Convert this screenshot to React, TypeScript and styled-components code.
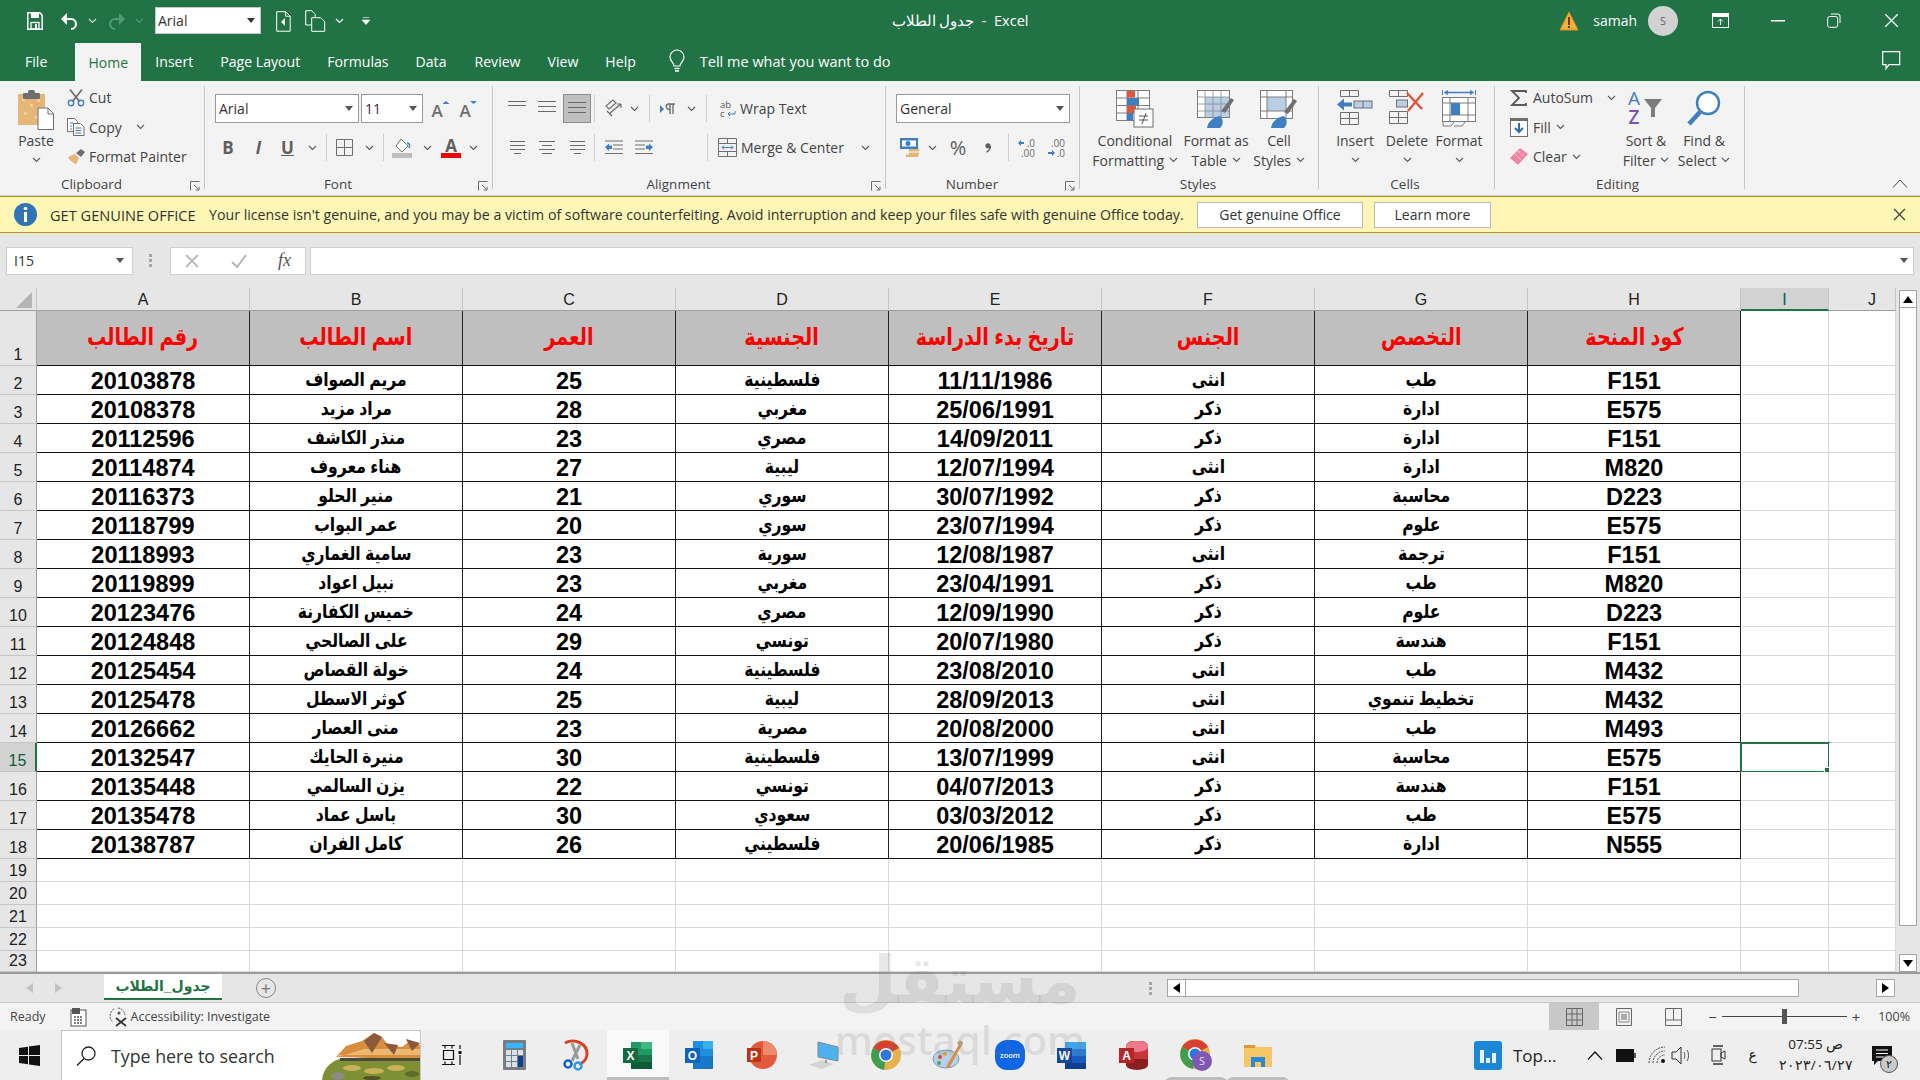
import React from "react";
import styled, {createGlobalStyle} from "styled-components";

const uiFont = `"Open Sans", "Noto Sans", sans-serif`;
const sheetFont = `"Liberation Sans", "DejaVu Sans", sans-serif`;

const GlobalStyle = createGlobalStyle`
  html, body { margin: 0; padding: 0; background: #fff; }
  body { font-family: ${uiFont}; overflow: hidden; }
  * { box-sizing: border-box; }
  svg { overflow: visible; }
`;

const headers = ["رقم الطالب", "اسم الطالب", "العمر", "الجنسية", "تاريخ بدء الدراسة", "الجنس", "التخصص", "كود المنحة"];
const students = [
    ["20103878", "مريم الصواف", "25", "فلسطينية", "11/11/1986", "انثى", "طب", "F151"],
    ["20108378", "مراد مزيد", "28", "مغربي", "25/06/1991", "ذكر", "ادارة", "E575"],
    ["20112596", "منذر الكاشف", "23", "مصري", "14/09/2011", "ذكر", "ادارة", "F151"],
    ["20114874", "هناء معروف", "27", "ليبية", "12/07/1994", "انثى", "ادارة", "M820"],
    ["20116373", "منير الحلو", "21", "سوري", "30/07/1992", "ذكر", "محاسبة", "D223"],
    ["20118799", "عمر البواب", "20", "سوري", "23/07/1994", "ذكر", "علوم", "E575"],
    ["20118993", "سامية الغماري", "23", "سورية", "12/08/1987", "انثى", "ترجمة", "F151"],
    ["20119899", "نبيل اعواد", "23", "مغربي", "23/04/1991", "ذكر", "طب", "M820"],
    ["20123476", "خميس الكفارنة", "24", "مصري", "12/09/1990", "ذكر", "علوم", "D223"],
    ["20124848", "على الصالحي", "29", "تونسي", "20/07/1980", "ذكر", "هندسة", "F151"],
    ["20125454", "خولة القصاص", "24", "فلسطينية", "23/08/2010", "انثى", "طب", "M432"],
    ["20125478", "كوثر الاسطل", "25", "ليبية", "28/09/2013", "انثى", "تخطيط تنموي", "M432"],
    ["20126662", "منى العصار", "23", "مصرية", "20/08/2000", "انثى", "طب", "M493"],
    ["20132547", "منيرة الحايك", "30", "فلسطينية", "13/07/1999", "انثى", "محاسبة", "E575"],
    ["20135448", "يزن السالمي", "22", "تونسي", "04/07/2013", "ذكر", "هندسة", "F151"],
    ["20135478", "باسل عماد", "30", "سعودي", "03/03/2012", "ذكر", "طب", "E575"],
    ["20138787", "كامل الفران", "26", "فلسطيني", "20/06/1985", "ذكر", "ادارة", "N555"],
];
const columns = ["A", "B", "C", "D", "E", "F", "G", "H", "I", "J"];
const ribbonTabs: [string, number][] = [["Insert", 14], ["Page Layout", 27], ["Formulas", 27], ["Data", 27], ["Review", 28], ["View", 27], ["Help", 27]];

const Chev = ({c = "#5a5a5a"}: { c?: string }) =>
    <svg width="9" height="6" viewBox="0 0 9 6"><path d="M1 1l3.500 3.500L8 1" stroke={c} strokeWidth="1.100" fill="none"/></svg>;
const Caret = ({c = "#555"}: { c?: string }) =>
    <svg width="8" height="5" viewBox="0 0 8 5"><path d="M0 0h8L4 5z" fill={c}/></svg>;
const Lines = ({w, x = [0, 0, 0, 0], gap = 4}: { w: number, x?: number[], gap?: number }) =>
    <svg width={w} height={gap * 3 + 1} viewBox={`0 0 ${w} ${gap * 3 + 1}`}>
        {x.map((o, i) => <rect key={i} x={o} y={i * gap} width={Math.max(w - 2 * o, 0)} height="1" fill="#6a6a6a"/>)}
    </svg>;

const SaveIcon = () => <svg width="16" height="18" viewBox="0 0 16 18"><path d="M.8.800h12l2.400 2.400v14H.8z" fill="none" stroke="#fff" strokeWidth="1.500"/><rect x="4" y="1" width="8" height="5" fill="#fff"/><rect x="4" y="10.500" width="8" height="6.500" fill="none" stroke="#fff" strokeWidth="1.300"/><rect x="8" y="12" width="2" height="4" fill="#fff"/></svg>;
const UndoIcon = ({dim}: { dim?: boolean }) => <svg width="19" height="18" viewBox="0 0 19 18" style={{transform: dim ? "scaleX(-1)" : undefined}}><path d="M6 7h5a5 5 0 0 1 0 10" fill="none" stroke={dim ? "#4f9a72" : "#fff"} strokeWidth="2.200"/><path d="M1 7l6-6v12z" fill={dim ? "#4f9a72" : "#fff"}/></svg>;
const DocIcon = () => <svg width="15" height="22" viewBox="0 0 15 22"><path d="M.7 1.700h9l4.500 4.500v15H.7z" fill="none" stroke="#fff"/><path d="M9.500 1.700v4.500h4.700" fill="none" stroke="#fff"/><path d="M9 8v8l-4-4z" fill="#fff"/></svg>;
const DocsIcon = () => <svg width="21" height="22" viewBox="0 0 21 22"><path d="M.7.700h6l3.500 3.500v10.800H.7z" fill="none" stroke="#fff"/><path d="M6.700 7.700h9l4 4v9.600h-13z" fill="#1f7244" stroke="#fff"/></svg>;
const WarnIcon = () => <svg width="20" height="20" viewBox="0 0 20 20"><path d="M10 1L19 19H1z" fill="#f4b23c" stroke="#e08a1e"/><rect x="9" y="6" width="2" height="8" fill="#7a3b00"/><rect x="9" y="15" width="2" height="2" fill="#7a3b00"/></svg>;
const RibbonDisplay = () => <svg width="17" height="15" viewBox="0 0 17 15"><rect x=".5" y=".5" width="16" height="14" fill="none" stroke="#fff"/><rect x="1" y="1" width="15" height="3" fill="#fff"/><path d="M8.500 12V6M6 8.500l2.500-2.500L11 8.500" fill="none" stroke="#fff"/></svg>;
const CommentIcon = () => <svg width="19" height="20" viewBox="0 0 19 20"><path d="M.7.700h17v13H7l-3 4v-4H.7z" fill="none" stroke="#fff" strokeWidth="1.200"/></svg>;
const BulbIcon = () => <svg width="16" height="23" viewBox="0 0 16 23"><path d="M5 16c0-3-4-5-4-9a7 7 0 0 1 14 0c0 4-4 6-4 9z" fill="none" stroke="#fff" strokeWidth="1.200"/><path d="M5.500 18.500h5M6 21h4" stroke="#fff" strokeWidth="1.400"/></svg>;

const PasteIcon = () => <svg width="36" height="40" viewBox="0 0 36 40">
    <rect y="4" width="27" height="31" fill="#e6b677"/><path d="M4 8h3v3H4zM12 14h3v3h-3zM19 9h3v3h-3zM6 22h3v3H6zM17 26h3v3h-3z" fill="#f0cda0"/>
    <rect x="5" y="3" width="17" height="6" rx="1" fill="#6f6f6f"/><rect x="10" y="0" width="7" height="5" rx="2" fill="#6f6f6f"/>
    <path d="M20 18h10l5.500 5.500V39.500H20z" fill="#fff" stroke="#6f6f6f"/><path d="M30 18v6h5.500" fill="none" stroke="#6f6f6f"/></svg>;
const CutIcon = () => <svg width="18" height="18" viewBox="0 0 18 18"><path d="M3 .5l9.500 12M15 .5L5.500 12.500" stroke="#6f6f6f" strokeWidth="1.800"/><circle cx="4" cy="14" r="2.700" fill="none" stroke="#3f7fc1" strokeWidth="1.400"/><circle cx="14" cy="14" r="2.700" fill="none" stroke="#3f7fc1" strokeWidth="1.400"/></svg>;
const CopyIcon = () => <svg width="18" height="18" viewBox="0 0 18 18"><path d="M.5.500h7l3 3v10H.5z" fill="#fff" stroke="#6f6f6f"/><path d="M6.500 5.500h7l3.500 3.500v8.500H6.500z" fill="#fff" stroke="#6f6f6f"/><path d="M3 5h3M3 8h2M3 11h2M8.500 10h6M8.500 12.500h6M8.500 15h6" stroke="#3f7fc1"/></svg>;
const PainterIcon = () => <svg width="19" height="17" viewBox="0 0 19 17"><path d="M1 9l7-3 4 4-3 6.500C7 15 2 12 1 9z" fill="#e6b677"/><path d="M9 5l5-4 4 3-4 5z" fill="#6f6f6f"/></svg>;
const Launcher = () => <svg width="10" height="10" viewBox="0 0 10 10"><path d="M.5 9.500V.5h9M4 4l5 5M9 5.500V9H5.500" fill="none" stroke="#6f6f6f"/></svg>;
const GrowIcon = ({down}: { down?: boolean }) => <svg width="20" height="18" viewBox="0 0 20 18"><path d={down ? "M12 1h7l-3.500 3z" : "M12.500 4L16 1l3.500 3z"} fill="#3f7fc1"/><text x="7" y="17" fontFamily="Open Sans" fontSize="17" fill="#6f6f6f" fontWeight="600" textAnchor="middle">A</text></svg>;
const BorderIcon = () => <svg width="17" height="17" viewBox="0 0 17 17"><path d="M.5.500h16v16H.5zM8.500.500v16M.5 8.500h16" fill="none" stroke="#6f6f6f"/></svg>;
const FillIcon = () => <svg width="21" height="20" viewBox="0 0 21 20"><path d="M9 1l7 7-6 6-6-6z" fill="#fff" stroke="#6f6f6f"/><path d="M15 5c3 0 3 3 2 5" fill="none" stroke="#3f7fc1" strokeWidth="1.500"/><rect y="15" width="20" height="5" fill="#bdbdbd"/></svg>;
const FontColor = () => <svg width="20" height="20" viewBox="0 0 20 20"><text x="10" y="14" fontFamily="Open Sans" fontSize="17" fontWeight="700" fill="#5f5f5f" textAnchor="middle">A</text><rect y="15" width="20" height="5" fill="#f00000"/></svg>;
const OrientIcon = () => <svg width="19" height="19" viewBox="0 0 19 19"><path d="M1 7l7-6 3 3-7 6zM5 14l11-9M16 5v4M16 5h-4M2 12l5 5" fill="none" stroke="#6f6f6f" strokeWidth="1.200"/></svg>;
const ParaIcon = () => <svg width="16" height="12" viewBox="0 0 16 12"><path d="M0 2l4 4-4 4z" fill="#3f7fc1"/><path d="M10 1v10M13 1v10M8 1h7M10 6a2.500 2.500 0 0 1-2-5" fill="none" stroke="#6f6f6f" strokeWidth="1.400"/></svg>;
const WrapIcon = () => <svg width="16" height="18" viewBox="0 0 16 18"><text x="0" y="8" fontFamily="Open Sans" fontSize="9.500" fill="#555">ab</text><text x="0" y="17" fontFamily="Open Sans" fontSize="9.500" fill="#555">c</text><path d="M15 11v3h-7M10 12l-2 2 2 2" fill="none" stroke="#3f7fc1"/></svg>;
const MergeIcon = () => <svg width="19" height="19" viewBox="0 0 19 19"><path d="M.5.500h18v18H.5zM.5 5.500h18M.5 13.500h18M9.500.500v5M9.500 13.500v5" fill="none" stroke="#6f6f6f"/><path d="M4 9.500h11M6 7.500l-2 2 2 2M13 7.500l2 2-2 2" fill="none" stroke="#3f7fc1"/></svg>;
const IndentIcon = ({out}: { out?: boolean }) => <svg width="18" height="13" viewBox="0 0 18 13" style={{transform: out ? undefined : "scaleX(-1)"}}><path d="M0 0h18M8 4h10M8 8h10M0 12.500h18" stroke="#6f6f6f"/><path d="M0 6.300L4 2.500v2h3v3.500H4v2z" fill="#3f7fc1"/></svg>;
const AccountIcon = () => <svg width="20" height="19" viewBox="0 0 20 19"><rect width="18" height="11" fill="#3f7fc1"/><rect x="2" y="2.500" width="14" height="6" fill="#fff"/><circle cx="8" cy="5.500" r="2.500" fill="#3f7fc1"/><path d="M9 11h10v2.500H9zM9 14.500h10V17H9zM6 16.500h12V19H6z" fill="#e6b677"/></svg>;
const CommaIcon = () => <svg width="6" height="9" viewBox="0 0 6 9"><circle cx="3" cy="2.800" r="2.600" fill="#5f5f5f"/><path d="M5.500 3C5.500 6 4 8 1.500 9" fill="none" stroke="#5f5f5f" strokeWidth="1.400"/></svg>;
const DecimalIcon = ({more}: { more?: boolean }) => <svg width="18" height="20" viewBox="0 0 18 20">
    <text x="18" y="9" textAnchor="end" fontFamily="Open Sans" fontSize="10" fill="#6f6f6f">{more ? ".0" : ".00"}</text>
    <text x="18" y="19" textAnchor="end" fontFamily="Open Sans" fontSize="10" fill="#6f6f6f">{more ? ".00" : ".0"}</text>
    <path d={more ? "M1 5l3-3v2h3v2H4v2z" : "M8 15l-3-3v2H1v2h4v2z"} fill="#3f7fc1"/></svg>;
const CondIcon = () => <svg width="38" height="38" viewBox="0 0 38 38"><rect x=".5" y=".5" width="33" height="30" fill="#fff" stroke="#7c7c7c"/><path d="M11 .5v30M22 .5v30M.5 8h33M.5 15.500h33M.5 23h33" stroke="#7c7c7c"/><rect x="11" y="1" width="8" height="6.500" fill="#e0553b"/><rect x="11" y="8" width="12" height="7" fill="#3f7fc1"/><rect x="11" y="16" width="9" height="7" fill="#e0553b"/><rect x="11" y="23" width="6" height="7" fill="#3f7fc1"/><rect x="18" y="19" width="19" height="18" fill="#fff" stroke="#6f6f6f"/><path d="M23 26h9M23 30h9M30 23l-4 11" stroke="#555"/></svg>;
const TableIcon = () => <svg width="38" height="38" viewBox="0 0 38 38"><rect x=".5" y=".5" width="32" height="27" fill="#fff" stroke="#7c7c7c"/><rect x="8" y="7" width="24" height="20" fill="#b9d0e4"/><path d="M8 .5v27M16 .5v27M24 .5v27M.5 7h32M.5 14h32M.5 21h32" stroke="#7c7c7c" opacity=".7"/><path d="M24 21l10-13 3 2-9 13z" fill="#6f6f6f"/><path d="M10 38c1-7 7-11 13-12 3 3 4 8 0 12z" fill="#3f7fc1"/></svg>;
const CellIcon = () => <svg width="38" height="38" viewBox="0 0 38 38"><rect x=".5" y=".5" width="32" height="28" fill="#fff" stroke="#7c7c7c"/><rect x="7" y="7" width="19" height="14" fill="#b9d0e4"/><path d="M7 .5v28M26 .5v28M.5 7h32M.5 21h32" stroke="#7c7c7c"/><path d="M24 22l10-13 3 2-9 13z" fill="#6f6f6f"/><path d="M11 38c1-7 7-11 13-12 3 3 4 8 0 12z" fill="#3f7fc1"/></svg>;
const InsertIcon = () => <svg width="36" height="36" viewBox="0 0 36 36"><path d="M3.500.500h18v6h-18zM12.500.500v6M3.500 22.500h18v12h-18zM3.500 28.500h18M12.500 22.500v12" fill="none" stroke="#6f6f6f"/><rect x="17" y="11" width="18" height="7" fill="#b9d0e4" stroke="#6f6f6f"/><path d="M26 11v7" stroke="#6f6f6f"/><path d="M0 14.500l7-6v4h8v4H7v4z" fill="#3f7fc1"/></svg>;
const DeleteIcon = () => <svg width="36" height="34" viewBox="0 0 36 34"><path d="M.5.500h18v6H.5zM9.500.500v6M.5 21.500h18v12H.5zM.5 27.500h18M9.500 21.500v12" fill="none" stroke="#6f6f6f"/><rect x="7.500" y="10" width="11" height="7" fill="#b9d0e4" stroke="#6f6f6f"/><path d="M18 3l15 16M34 3L19 21" stroke="#e0553b" strokeWidth="2.400"/></svg>;
const FormatIcon = () => <svg width="34" height="38" viewBox="0 0 34 38"><path d="M.5 0v5M33.500 0v5" stroke="#3f7fc1"/><path d="M3 2.500h28M6 .5l-3 2 3 2M28 .5l3 2-3 2" fill="none" stroke="#3f7fc1" strokeWidth="1.400"/><rect x=".5" y="7.500" width="33" height="24" fill="#fff" stroke="#7c7c7c"/><path d="M8 7.500v24M26 7.500v24M.5 13h33M.5 25h33" stroke="#7c7c7c"/><rect x="9" y="13" width="9" height="12" fill="#3f7fc1"/><path d="M1 32v4h8l3-4M12 36h8l3-4" fill="none" stroke="#7c7c7c"/></svg>;
const SigmaIcon = () => <svg width="16" height="16" viewBox="0 0 16 16"><path d="M15 3V1H1l7 7-7 7h14v-2" fill="none" stroke="#5a5a5a" strokeWidth="1.800"/></svg>;
const FillDownIcon = () => <svg width="18" height="19" viewBox="0 0 18 19"><rect x=".5" y=".5" width="17" height="18" fill="#fff" stroke="#6f6f6f"/><rect width="18" height="3" fill="#6f6f6f"/><path d="M9 5v8M5 10l4 4 4-4" fill="none" stroke="#2a6fb5" strokeWidth="2"/></svg>;
const EraserIcon = () => <svg width="18" height="17" viewBox="0 0 18 17"><path d="M0 10L10 0l8 6-10 11z" fill="#ee86a4"/><path d="M5 6l6 6M8 3l6 6" stroke="#fff" strokeDasharray="1 1"/></svg>;
const SortIcon = () => <svg width="36" height="36" viewBox="0 0 36 36"><text x="6" y="15" textAnchor="middle" fontFamily="Open Sans" fontSize="19" fill="#3f7fc1">A</text><text x="6" y="34" textAnchor="middle" fontFamily="Open Sans" fontWeight="600" fontSize="19" fill="#7b52b5">Z</text><path d="M16 9h18l-7 9v9h-4v-9z" fill="#7c7c7c"/></svg>;
const FindIcon = () => <svg width="36" height="36" viewBox="0 0 36 36"><circle cx="22" cy="13" r="11" fill="#fff" stroke="#3f7fc1" strokeWidth="2.400"/><path d="M14 22L3 34" stroke="#3f7fc1" strokeWidth="4.500"/></svg>;
const InfoIcon = () => <svg width="23" height="23" viewBox="0 0 23 23"><circle cx="11.500" cy="11.500" r="11.500" fill="#2f75b5"/><rect x="10" y="9" width="3" height="10" fill="#fff"/><circle cx="11.500" cy="5.500" r="1.800" fill="#fff"/></svg>;
const CrossIcon = ({c = "#444", s = 12, w = 1.2}: { c?: string, s?: number, w?: number }) => <svg width={s} height={s} viewBox="0 0 12 12"><path d="M1 1l10 10M11 1L1 11" stroke={c} strokeWidth={w} fill="none"/></svg>;
const CheckIcon = () => <svg width="16" height="14" viewBox="0 0 16 14"><path d="M1 8l5 5 9-12" stroke="#b5b5b5" strokeWidth="2" fill="none"/></svg>;
const CornerIcon = () => <svg width="16" height="16" viewBox="0 0 16 16"><path d="M16 0v16H0z" fill="#b5b5b5"/></svg>;
const Arrow = ({dir, c = "#000"}: { dir: "up" | "down" | "left" | "right", c?: string }) => {
    const d = {up: "M0 7L5 0l5 7z", down: "M0 0h10L5 7z", left: "M7 0v10L0 5z", right: "M0 0v10l7-5z"}[dir];
    return <svg width={dir === "up" || dir === "down" ? 10 : 7} height={dir === "up" || dir === "down" ? 7 : 10}><path d={d} fill={c}/></svg>;
};
const MacroIcon = () => <svg width="15" height="18" viewBox="0 0 15 18"><rect y="2" width="15" height="16" fill="#fff" stroke="#555"/><rect x="1" y="0" width="8" height="6" fill="#555"/><path d="M3 9h9M3 12h9M3 15h9" stroke="#555" strokeWidth="1.500" strokeDasharray="2 1"/></svg>;
const AccessIcon = () => <svg width="20" height="20" viewBox="0 0 20 20"><path d="M5 2a8 8 0 0 0-1 13" fill="none" stroke="#555" strokeDasharray="2 1"/><path d="M9 1a8 8 0 0 1 7 7" fill="none" stroke="#555" strokeDasharray="2 1"/><circle cx="10" cy="6" r="1.500" fill="#555"/><path d="M7 11l10 8M17 11L7 19" stroke="#333" strokeWidth="1.700"/></svg>;
const NormalView = () => <svg width="17" height="18" viewBox="0 0 17 18"><path d="M.5.500h16v17H.5zM.5 6h16M.5 12h16M6 .5v17M11 .5v17" fill="none" stroke="#666"/></svg>;
const PageView = () => <svg width="16" height="18" viewBox="0 0 16 18"><path d="M.5.500h15v17H.5z" fill="none" stroke="#666"/><path d="M3 4h10v10H3z" fill="none" stroke="#888"/><path d="M5 7h6M5 9h6M5 11h6" stroke="#666"/></svg>;
const BreakView = () => <svg width="17" height="18" viewBox="0 0 17 18"><path d="M.5.500h16v17H.5zM.5 12h16M8.500.500V12" fill="none" stroke="#666"/></svg>;
const WinLogo = () => <svg width="21" height="21" viewBox="0 0 21 21"><path d="M0 3l9-1.300V10H0zM10 1.500L21 0v10H10zM0 11h9v8.300L0 18zM10 11h11v10l-11-1.500z" fill="#111"/></svg>;
const SearchIcon = () => <svg width="20" height="20" viewBox="0 0 20 20"><circle cx="12.500" cy="7.500" r="6.500" fill="none" stroke="#222" strokeWidth="1.300"/><path d="M8 12.500L1 19.500" stroke="#222" strokeWidth="1.500"/></svg>;
const Landscape = () => <svg width="98" height="50" viewBox="0 0 98 50"><path d="M0 50c0-10 8-20 18-22l60-4 20 2v24z" fill="#7f8f33"/><path d="M14 26l10-11 16-5 12-8 8 4 6 8 14 2 8-6 10 4v14z" fill="#d98d3e"/><path d="M16 26l26-8 56 0v6H16z" fill="#ecb870"/><path d="M42 10l10-8 8 4-10 16zM62 12l14 2-4 10zM84 8l14 4-8 8z" fill="#8a5a3a"/><path d="M18 27h80v3H18z" fill="#4b4a3c"/><ellipse cx="30" cy="37" rx="9" ry="3" fill="#c9b15b"/><ellipse cx="52" cy="40" rx="10" ry="3" fill="#c9b15b"/><ellipse cx="74" cy="37" rx="9" ry="3" fill="#c9b15b"/><ellipse cx="90" cy="43" rx="7" ry="3" fill="#5c6a2a"/><ellipse cx="16" cy="45" rx="7" ry="4" fill="#8c8c80"/><ellipse cx="50" cy="47" rx="9" ry="2" fill="#4f5526"/></svg>;
const TaskViewIcon = () => <svg width="20" height="20" viewBox="0 0 20 20"><path d="M0 .5h13M0 19.500h13M1.500 5.500h10v9h-10zM3 .5v3M10 .5v3M3 16.500v3M10 16.500v3M18 0v4M18 10v10" fill="none" stroke="#111" strokeWidth="1.200"/><rect x="16.500" y="6" width="3" height="3" fill="#111"/></svg>;
const CalcIcon = () => <svg width="23" height="30" viewBox="0 0 23 30"><rect width="23" height="30" rx="1" fill="#7a7d80"/><rect x="3" y="3" width="17" height="5" fill="#38b6ff"/><path d="M3 10h5v5H3zM9 10h5v5H9zM15 10h5v5h-5zM3 16h5v5H3zM9 16h5v5H9zM3 22h5v5H3zM9 22h5v5H9z" fill="#d8e3ea"/><rect x="15" y="16" width="5" height="11" fill="#10418f"/></svg>;
const SnipIcon = () => <svg width="26" height="30" viewBox="0 0 26 30"><path d="M2 3c9-5 23 0 22 12-1 5-4 8-8 9" fill="none" stroke="#d9401f" strokeWidth="2.800"/><path d="M9 3l6 16M17 5L9 21" stroke="#9b9b9b" strokeWidth="3"/><circle cx="5" cy="24" r="3.500" fill="none" stroke="#1464c0" strokeWidth="2.500"/><circle cx="15" cy="26" r="3.500" fill="none" stroke="#2f9ae8" strokeWidth="2.500"/></svg>;
const ExcelIcon = () => <svg width="30" height="29" viewBox="0 0 30 29"><path d="M8 1h21v27H8z" fill="#1d9b62"/><path d="M18 1h11v7H18z" fill="#3fb784"/><path d="M8 14h21v7H8z" fill="#17774a"/><path d="M8 21h21v7H8z" fill="#0f5c38"/><rect y="7" width="15" height="15" fill="#156b3e"/><text x="7.500" y="19" textAnchor="middle" fontFamily="Liberation Sans" fontWeight="700" fontSize="12" fill="#fff">X</text></svg>;
const OutlookIcon = () => <svg width="30" height="30" viewBox="0 0 30 30"><path d="M8 1h20v28H8z" fill="#1f8fe0"/><path d="M18 1h10v8H18z" fill="#36b0f0"/><path d="M8 16h20v13H8z" fill="#1678c8"/><rect y="8" width="15" height="15" fill="#0f62bd"/><text x="7.500" y="20" textAnchor="middle" fontFamily="Liberation Sans" fontWeight="700" fontSize="12" fill="#fff">O</text></svg>;
const PptIcon = () => <svg width="30" height="30" viewBox="0 0 30 30"><circle cx="16" cy="15" r="14" fill="#e3593c"/><path d="M16 1a14 14 0 0 1 14 14H16z" fill="#f08a6c"/><rect y="8" width="14" height="14" fill="#bb3418"/><text x="7" y="20" textAnchor="middle" fontFamily="Liberation Sans" fontWeight="700" fontSize="12" fill="#fff">P</text></svg>;
const PcIcon = () => <svg width="30" height="28" viewBox="0 0 30 28"><path d="M9 1l20 5v14L9 16z" fill="#4fb0ee" stroke="#7a8a99"/><path d="M0 24l13-5 12 4-12 5z" fill="#d4d4d4"/><path d="M17 19v3" stroke="#999" strokeWidth="2"/></svg>;
const ChromeIcon = ({s = 30}: { s?: number }) => <svg width={s} height={s} viewBox="0 0 30 30"><circle cx="15" cy="15" r="15" fill="#e8b24a"/><path d="M15 15L2 8a15 15 0 0 1 26 0z" fill="#d8412f"/><path d="M15 15L2 8a15 15 0 0 0 11 22z" fill="#3f9e4d"/><circle cx="15" cy="15" r="7" fill="#fff"/><circle cx="15" cy="15" r="5.500" fill="#2a77e0"/></svg>;
const PaintIcon = () => <svg width="30" height="30" viewBox="0 0 30 30"><ellipse cx="13" cy="19" rx="13" ry="9" fill="#b6d0ea" stroke="#7d99b8"/><circle cx="7" cy="17" r="2" fill="#d9482f"/><circle cx="12" cy="14" r="2" fill="#e5a92f"/><circle cx="6" cy="23" r="2" fill="#4fa35a"/><path d="M28 1l2 2-14 25-3-1z" fill="#d98d3e"/><path d="M27 0l3 3-3 3-3-3z" fill="#b7a68a"/></svg>;
const ZoomIcon = () => <svg width="30" height="30" viewBox="0 0 30 30"><rect width="30" height="30" rx="12" fill="#0f66e8"/><text x="15" y="18" textAnchor="middle" fontFamily="Open Sans" fontWeight="600" fontSize="7.500" fill="#fff">zoom</text></svg>;
const WordIcon = () => <svg width="30" height="29" viewBox="0 0 30 29"><path d="M8 1h21v27H8z" fill="#2b7cd3"/><path d="M8 1h21v7H8z" fill="#41a5ee"/><path d="M8 15h21v7H8z" fill="#185abd"/><path d="M8 22h21v6H8z" fill="#103f91"/><rect y="7" width="15" height="15" fill="#14489f"/><text x="7.500" y="19" textAnchor="middle" fontFamily="Liberation Sans" fontWeight="700" fontSize="12" fill="#fff">W</text></svg>;
const AccessDb = () => <svg width="30" height="30" viewBox="0 0 30 30"><rect x="7" y="1" width="22" height="28" rx="6" fill="#c8353a"/><path d="M7 7a11 5 0 0 0 22 0V5a11 4 0 0 0-22 0z" fill="#ed7a8a"/><path d="M7 19h22v6a11 5 0 0 1-22 0z" fill="#8a1e20"/><rect y="8" width="15" height="15" fill="#b3262a"/><text x="7.500" y="20" textAnchor="middle" fontFamily="Liberation Sans" fontWeight="700" fontSize="12" fill="#fff">A</text></svg>;
const ChromeProfile = () => <svg width="33" height="33" viewBox="0 0 33 33"><circle cx="15" cy="15" r="15" fill="#e8b24a"/><path d="M15 15L2 8a15 15 0 0 1 26 0z" fill="#d8412f"/><path d="M15 15L2 8a15 15 0 0 0 11 22z" fill="#3f9e4d"/><circle cx="15" cy="15" r="7" fill="#fff"/><circle cx="15" cy="15" r="5.500" fill="#2a77e0"/><circle cx="22" cy="22" r="10" fill="#7f57b5"/><text x="22" y="26" textAnchor="middle" fontFamily="Open Sans" fontSize="11" fill="#e5dcf2">S</text></svg>;
const FolderIcon = () => <svg width="28" height="24" viewBox="0 0 28 24"><path d="M0 2h11l2 2h15v20H0z" fill="#f6c766"/><path d="M0 2h11v3H0z" fill="#d89a33"/><path d="M7 14h14v10h-4v-5h-6v5H7z" fill="#2a8ad8"/></svg>;
const TopIcon = () => <svg width="28" height="29" viewBox="0 0 28 29"><rect width="28" height="29" rx="3" fill="#1c86d9"/><path d="M6 9h4v13H6zM12 17h4v5h-4zM18 12h4v10h-4z" fill="#e8f3fc"/></svg>;
const BatteryIcon = () => <svg width="20" height="13" viewBox="0 0 20 13"><rect x=".5" y=".5" width="17" height="12" fill="#111" stroke="#111"/><rect x="18" y="4" width="2" height="5" fill="#555"/></svg>;
const WifiIcon = () => <svg width="18" height="18" viewBox="0 0 18 18"><path d="M1 17A16 16 0 0 1 17 1M5 17A12 12 0 0 1 17 5M9 17a8 8 0 0 1 8-8" fill="none" stroke="#444" strokeDasharray="2 1"/><circle cx="15" cy="15" r="2" fill="#111"/></svg>;
const SpeakerIcon = () => <svg width="20" height="19" viewBox="0 0 20 19"><path d="M1 6h4l5-5v17l-5-5H1z" fill="none" stroke="#333"/><path d="M13 6c1 2 1 5 0 7M16 4c2 3 2 8 0 11" fill="none" stroke="#555"/></svg>;
const CamIcon = () => <svg width="15" height="24" viewBox="0 0 15 24"><path d="M2 3h10M2 21h10" stroke="#333" strokeWidth="1.500"/><rect x="1" y="6" width="9" height="12" fill="none" stroke="#333"/><path d="M10 10l4-2v8l-4-2z" fill="none" stroke="#333"/></svg>;
const NoticeIcon = () => <svg width="20" height="19" viewBox="0 0 20 19"><path d="M0 0h20v15H6l-4 4v-4H0z" fill="#111"/><path d="M4 4h12M4 7.500h12M4 11h8" stroke="#fff"/></svg>;

export default function App() {
    return (
        <Window>
            <GlobalStyle/>
            <TitleBar>
                <QuickAccess>
                    <Tool $w={17} $ml={26}><SaveIcon/></Tool>
                    <Tool $w={19} $ml={17}><UndoIcon/></Tool>
                    <Tool $w={12} $ml={7}><Chev c="#cfe3d8"/></Tool>
                    <Tool $w={19} $ml={9}><UndoIcon dim/></Tool>
                    <Tool $w={12} $ml={7}><Chev c="#4f9a72"/></Tool>
                    <QuickCombo>Arial<Caret c="#333"/></QuickCombo>
                    <Tool $w={15} $ml={15}><DocIcon/></Tool>
                    <Tool $w={21} $ml={14}><DocsIcon/></Tool>
                    <Tool $w={12} $ml={7}><Chev c="#fff"/></Tool>
                    <Tool $w={8} $ml={17}>
                        <svg width="8" height="8" viewBox="0 0 8 8"><path d="M1 .5h6M0 3h8L4 7.500z" fill="#fff" stroke="#fff" strokeWidth=".6"/></svg>
                    </Tool>
                </QuickAccess>
                <DocTitle><span dir="rtl">جدول الطلاب</span><span>&nbsp;&nbsp;-&nbsp;&nbsp;Excel</span></DocTitle>
                <WindowActions>
                    <WarnIcon/>
                    <UserName>samah</UserName>
                    <Avatar>S</Avatar>
                    <Tool $w={17} $ml={34}><RibbonDisplay/></Tool>
                    <Tool $w={15} $ml={41}><svg width="14" height="2"><rect width="14" height="1.500" fill="#fff"/></svg></Tool>
                    <Tool $w={15} $ml={41}>
                        <svg width="14" height="15" viewBox="0 0 14 15"><rect x=".7" y="3.500" width="10" height="10.800" rx="2" fill="none" stroke="#fff"/><path d="M4 1h7a2 2 0 0 1 2 2v7" fill="none" stroke="#fff"/></svg>
                    </Tool>
                    <Tool $w={15} $ml={43}><CrossIcon c="#fff" s={15} w={1}/></Tool>
                </WindowActions>
            </TitleBar>
            <TabStrip>
                <TabLabel $ml={25}>File</TabLabel>
                <HomeTab>Home</HomeTab>
                {ribbonTabs.map(([name, gap]) => <TabLabel key={name} $ml={gap}>{name}</TabLabel>)}
                <Tool $w={16} $ml={33}><BulbIcon/></Tool>
                <TabLabel $ml={15} $size={14.5}>Tell me what you want to do</TabLabel>
                <CommentSlot><CommentIcon/></CommentSlot>
            </TabStrip>

            <Ribbon>
                <Group $w={205}>
                    <GroupBody>
                        <BigButton $w={67} $pl={5}>
                            <BigIcon><PasteIcon/></BigIcon>
                            <BigLabel>Paste</BigLabel>
                            <BigLabel><Chev/></BigLabel>
                        </BigButton>
                        <SmallStack>
                            <SmallRow><Tool $w={18}><CutIcon/></Tool><SmallText>Cut</SmallText></SmallRow>
                            <SmallRow><Tool $w={18}><CopyIcon/></Tool><SmallText>Copy</SmallText><Tool $w={9} $ml={14}><Chev/></Tool></SmallRow>
                            <SmallRow><Tool $w={18}><PainterIcon/></Tool><SmallText>Format Painter</SmallText></SmallRow>
                        </SmallStack>
                    </GroupBody>
                    <GroupLabel $pr={22}>Clipboard</GroupLabel>
                    <LauncherSlot><Launcher/></LauncherSlot>
                </Group>

                <Group $w={288}>
                    <ToolRows>
                        <ToolRow $pl={10}>
                            <Combo $w={144}>Arial<Caret/></Combo>
                            <Combo $w={62} $ml={2}>11<Caret/></Combo>
                            <Tool $w={28} $ml={3}><GrowIcon/></Tool>
                            <Tool $w={28}><GrowIcon down/></Tool>
                        </ToolRow>
                        <ToolRow $pl={8}>
                            <Tool $w={30}><Glyph $bold>B</Glyph></Tool>
                            <Tool $w={31}><Glyph $bold $italic>I</Glyph></Tool>
                            <Tool $w={27}><Glyph $bold $under>U</Glyph></Tool>
                            <Tool $w={22}><Chev/></Tool>
                            <Sep $ml={3}/>
                            <Tool $w={26} $ml={4}><BorderIcon/></Tool>
                            <Tool $w={20} $ml={2}><Chev/></Tool>
                            <Sep $ml={4}/>
                            <Tool $w={26} $ml={5}><FillIcon/></Tool>
                            <Tool $w={18} $ml={3}><Chev/></Tool>
                            <Tool $w={26} $ml={2}><FontColor/></Tool>
                            <Tool $w={18}><Chev/></Tool>
                        </ToolRow>
                    </ToolRows>
                    <GroupLabel $pr={22}>Font</GroupLabel>
                    <LauncherSlot><Launcher/></LauncherSlot>
                </Group>

                <Group $w={393}>
                    <ToolRows>
                        <ToolRow $pl={10} $pr={14}>
                            <Tool $w={28}><AlignSlot $v="top"><Lines w={18} gap={4} x={[0, 0, 9, 9]}/></AlignSlot></Tool>
                            <Tool $w={28} $ml={2}><Lines w={18} x={[0, 0, 0, 9]} gap={5}/></Tool>
                            <Tool $w={28} $ml={2} $on><AlignSlot $v="bottom"><Lines w={18} x={[0, 0, 0, 9]} gap={5}/></AlignSlot></Tool>
                            <Sep $ml={3}/>
                            <Tool $w={28} $ml={5}><OrientIcon/></Tool>
                            <Tool $w={12}><Chev/></Tool>
                            <Sep $ml={9}/>
                            <Tool $w={20} $ml={8}><ParaIcon/></Tool>
                            <Tool $w={14} $ml={6}><Chev/></Tool>
                            <Sep $ml={8}/>
                            <Tool $w={20} $ml={11}><WrapIcon/></Tool>
                            <RowText $ml={2}>Wrap Text</RowText>
                        </ToolRow>
                        <ToolRow $pl={10} $pr={14}>
                            <Tool $w={28}><Lines w={15} x={[0, 0, 0, 4]}/></Tool>
                            <Tool $w={28} $ml={2}><Lines w={16} x={[0, 3, 0, 3]}/></Tool>
                            <Tool $w={28} $ml={2}><Lines w={15} x={[0, 0, 0, 4]}/></Tool>
                            <Sep $ml={3}/>
                            <Tool $w={28} $ml={5}><IndentIcon out/></Tool>
                            <Tool $w={28} $ml={2}><IndentIcon/></Tool>
                            <Sep $ml={49}/>
                            <Tool $w={20} $ml={9}><MergeIcon/></Tool>
                            <RowText $ml={4}>Merge &amp; Center</RowText>
                            <PushRight><Tool $w={14}><Chev/></Tool></PushRight>
                        </ToolRow>
                    </ToolRows>
                    <GroupLabel $pr={22}>Alignment</GroupLabel>
                    <LauncherSlot><Launcher/></LauncherSlot>
                </Group>

                <Group $w={194}>
                    <ToolRows>
                        <ToolRow $pl={10}><Combo $w={174}>General<Caret/></Combo></ToolRow>
                        <ToolRow $pl={10}>
                            <Tool $w={24} $ml={2}><AccountIcon/></Tool>
                            <Tool $w={14} $ml={3}><Chev/></Tool>
                            <Tool $w={24} $ml={7}><Glyph $size={20}>%</Glyph></Tool>
                            <Tool $w={16} $ml={10}><CommaIcon/></Tool>
                            <Sep $ml={12}/>
                            <Tool $w={20} $ml={7}><DecimalIcon more/></Tool>
                            <Tool $w={20} $ml={10}><DecimalIcon/></Tool>
                        </ToolRow>
                    </ToolRows>
                    <GroupLabel $pr={22}>Number</GroupLabel>
                    <LauncherSlot><Launcher/></LauncherSlot>
                </Group>

                <Group $w={239}>
                    <GroupBody $pl={6}>
                        <BigButton $w={98}><BigIcon><CondIcon/></BigIcon><BigLabel>Conditional</BigLabel><BigLabel>Formatting&nbsp;<Chev/></BigLabel></BigButton>
                        <BigButton $w={64}><BigIcon><TableIcon/></BigIcon><BigLabel>Format as</BigLabel><BigLabel>Table&nbsp;<Chev/></BigLabel></BigButton>
                        <BigButton $w={62}><BigIcon><CellIcon/></BigIcon><BigLabel>Cell</BigLabel><BigLabel>Styles&nbsp;<Chev/></BigLabel></BigButton>
                    </GroupBody>
                    <GroupLabel $pr={3}>Styles</GroupLabel>
                </Group>

                <Group $w={176}>
                    <GroupBody $pl={10}>
                        <BigButton $w={52}><BigIcon><InsertIcon/></BigIcon><BigLabel>Insert</BigLabel><BigLabel><Chev/></BigLabel></BigButton>
                        <BigButton $w={52}><BigIcon><DeleteIcon/></BigIcon><BigLabel>Delete</BigLabel><BigLabel><Chev/></BigLabel></BigButton>
                        <BigButton $w={52}><BigIcon><FormatIcon/></BigIcon><BigLabel>Format</BigLabel><BigLabel><Chev/></BigLabel></BigButton>
                    </GroupBody>
                    <GroupLabel $pr={4}>Cells</GroupLabel>
                </Group>

                <Group $w={250}>
                    <GroupBody>
                        <SmallStack $w={122} $pl={14}>
                            <SmallRow><Tool $w={20}><SigmaIcon/></Tool><SmallText>AutoSum</SmallText><Tool $w={9} $ml={14}><Chev/></Tool></SmallRow>
                            <SmallRow><Tool $w={20}><FillDownIcon/></Tool><SmallText>Fill</SmallText><Tool $w={9} $ml={5}><Chev/></Tool></SmallRow>
                            <SmallRow><Tool $w={20}><EraserIcon/></Tool><SmallText>Clear</SmallText><Tool $w={9} $ml={5}><Chev/></Tool></SmallRow>
                        </SmallStack>
                        <BigButton $w={58}><BigIcon><SortIcon/></BigIcon><BigLabel>Sort &amp;</BigLabel><BigLabel>Filter&nbsp;<Chev/></BigLabel></BigButton>
                        <BigButton $w={58}><BigIcon><FindIcon/></BigIcon><BigLabel>Find &amp;</BigLabel><BigLabel>Select&nbsp;<Chev/></BigLabel></BigButton>
                    </GroupBody>
                    <GroupLabel $pr={5}>Editing</GroupLabel>
                </Group>

                <CollapseSlot>
                    <svg width="16" height="9" viewBox="0 0 16 9"><path d="M1 8.500L8 1l7 7.500" fill="none" stroke="#444"/></svg>
                </CollapseSlot>
            </Ribbon>

            <MessageBar>
                <InfoIcon/>
                <MessageTitle>GET GENUINE OFFICE</MessageTitle>
                <MessageText>Your license isn't genuine, and you may be a victim of software counterfeiting. Avoid interruption and keep your files safe with genuine Office today.</MessageText>
                <MessageButton $w={166}>Get genuine Office</MessageButton>
                <MessageButton $w={117} $ml={11}>Learn more</MessageButton>
                <PushRight $pr={14}><CrossIcon s={13}/></PushRight>
            </MessageBar>

            <FormulaBar>
                <NameBox>I15<Caret/></NameBox>
                <GripDots $ml={16}/>
                <FxBox>
                    <CrossIcon c="#b5b5b5" s={14} w={1.6}/>
                    <CheckIcon/>
                    <FxText>fx</FxText>
                </FxBox>
                <FormulaInput><Caret/></FormulaInput>
            </FormulaBar>

            <SheetArea>
                <SheetGrid>
                    <ColHeader $corner><CornerIcon/></ColHeader>
                    {columns.map(c => <ColHeader key={c} $active={c === "I"} $pl={c === "J" ? 20 : 0}>{c}</ColHeader>)}

                    <RowHeader $tall>1</RowHeader>
                    {headers.map(h => <HeadCell key={h}><HeadText dir="rtl">{h}</HeadText></HeadCell>)}
                    <EmptyCell/><EmptyCell/>

                    {students.map((row, i) => <React.Fragment key={row[0]}>
                        <RowHeader $active={i + 2 === 15}>{i + 2}</RowHeader>
                        {row.map((value, j) => <DataCell key={j}>
                            <CellText $arabic={j === 1 || j === 3 || j === 5 || j === 6}>{value}</CellText>
                        </DataCell>)}
                        <EmptyCell $selected={i + 2 === 15}/><EmptyCell/>
                    </React.Fragment>)}

                    {[19, 20, 21, 22, 23].map(n => <React.Fragment key={n}>
                        <RowHeader>{n}</RowHeader>
                        {columns.map(c => <EmptyCell key={c}/>)}
                    </React.Fragment>)}
                </SheetGrid>
                <VScroll>
                    <ScrollButton><Arrow dir="up"/></ScrollButton>
                    <VThumb/>
                    <ScrollButton $pushed><Arrow dir="down"/></ScrollButton>
                </VScroll>
            </SheetArea>

            <SheetTabs>
                <Tool $w={7} $ml={26}><Arrow dir="left" c="#c2c2c2"/></Tool>
                <Tool $w={7} $ml={22}><Arrow dir="right" c="#c2c2c2"/></Tool>
                <SheetTab dir="rtl">جدول_الطلاب</SheetTab>
                <AddSheet>+</AddSheet>
                <GripDots $ml={873}/>
                <HScroll>
                    <HButton><Arrow dir="left"/></HButton>
                    <HThumb/>
                    <HButton $pushed><Arrow dir="right"/></HButton>
                </HScroll>
            </SheetTabs>

            <StatusBar>
                <StatusText $ml={10}>Ready</StatusText>
                <Tool $w={15} $ml={25}><MacroIcon/></Tool>
                <Tool $w={20} $ml={23}><AccessIcon/></Tool>
                <StatusText $ml={2}>Accessibility: Investigate</StatusText>
                <ViewButton $on $push><NormalView/></ViewButton>
                <ViewButton><PageView/></ViewButton>
                <ViewButton $w={48}><BreakView/></ViewButton>
                <ZoomControl>
                    <StatusText>−</StatusText>
                    <ZoomTrack><ZoomThumb/></ZoomTrack>
                    <StatusText>+</StatusText>
                </ZoomControl>
                <StatusText $ml={5} $mr={10}>100%</StatusText>
            </StatusBar>

            <Taskbar>
                <StartSlot><WinLogo/></StartSlot>
                <SearchBox>
                    <SearchIcon/>
                    <SearchText>Type here to search</SearchText>
                    <PushRight><Landscape/></PushRight>
                </SearchBox>
                <TaskItem><TaskViewIcon/></TaskItem>
                <TaskItem><CalcIcon/></TaskItem>
                <TaskItem><SnipIcon/></TaskItem>
                <TaskItem $active $open><ExcelIcon/></TaskItem>
                <TaskItem><OutlookIcon/></TaskItem>
                <TaskItem><PptIcon/></TaskItem>
                <TaskItem><PcIcon/></TaskItem>
                <TaskItem><ChromeIcon/></TaskItem>
                <TaskItem><PaintIcon/></TaskItem>
                <TaskItem><ZoomIcon/></TaskItem>
                <TaskItem><WordIcon/></TaskItem>
                <TaskItem><AccessDb/></TaskItem>
                <TaskItem $open><ChromeProfile/></TaskItem>
                <TaskItem $open><FolderIcon/></TaskItem>
                <Tray>
                    <TopIcon/>
                    <TrayText>Top...</TrayText>
                    <Tool $w={18} $ml={30}><svg width="16" height="9" viewBox="0 0 16 9"><path d="M1 8.500L8 1l7 7.500" fill="none" stroke="#111" strokeWidth="1.200"/></svg></Tool>
                    <Tool $w={20} $ml={12}><BatteryIcon/></Tool>
                    <Tool $w={18} $ml={12}><WifiIcon/></Tool>
                    <Tool $w={20} $ml={5}><SpeakerIcon/></Tool>
                    <Tool $w={15} $ml={20}><CamIcon/></Tool>
                    <TrayGlyph>ع</TrayGlyph>
                    <Clock>
                        <div>07:55 <span>ص</span></div>
                        <div>٢٠٢٣/٠٦/٢٧</div>
                    </Clock>
                    <NoticeSlot><NoticeIcon/><NoticeBadge>٢</NoticeBadge></NoticeSlot>
                </Tray>
            </Taskbar>

            <Watermark>
                <WatermarkArabic dir="rtl">مستقل</WatermarkArabic>
                <WatermarkLatin>mostaql.com</WatermarkLatin>
            </Watermark>
        </Window>
    )
}

//styled-components
const Window = styled.div`
  position: relative;
  width: 1920px;
  height: 1080px;
  display: flex;
  flex-direction: column;
  overflow: hidden;
  background: #f3f3f3;
  color: #333;
  font-family: ${uiFont};
`
const TitleBar = styled.div`
  height: 41px;
  flex: none;
  display: grid;
  grid-template-columns: 1fr auto 1fr;
  align-items: center;
  background: #217346;
  color: #fff;
`
const QuickAccess = styled.div`
  display: flex;
  align-items: center;
`
const Tool = styled.span<{ $w: number, $ml?: number, $on?: boolean }>`
  flex: none;
  display: inline-flex;
  align-items: center;
  justify-content: center;
  position: relative;
  width: ${p => p.$w}px;
  height: 29px;
  margin-left: ${p => p.$ml || 0}px;
  background: ${p => p.$on ? "#c0c0c0" : "transparent"};
  border: ${p => p.$on ? "1px solid #8d8d8d" : "0"};
`
const QuickCombo = styled.div`
  width: 106px;
  height: 27px;
  margin-left: 10px;
  padding: 0 5px 0 2px;
  display: flex;
  align-items: center;
  justify-content: space-between;
  background: #fff;
  border: 1px solid #c6c6c6;
  color: #333;
  font-size: 14px;
`
const DocTitle = styled.div`
  font-size: 14.500px;
  display: flex;
  flex-direction: row;
  white-space: nowrap;
`
const WindowActions = styled.div`
  display: flex;
  align-items: center;
  justify-content: flex-end;
  padding-right: 21px;
`
const UserName = styled.span`
  margin-left: 14px;
  font-size: 14px;
`
const Avatar = styled.span`
  width: 30px;
  height: 30px;
  margin-left: 11px;
  border-radius: 50%;
  background: #d2d2d2;
  color: #666;
  font-size: 11px;
  display: flex;
  align-items: center;
  justify-content: center;
`
const TabStrip = styled.div`
  height: 40px;
  flex: none;
  display: flex;
  align-items: center;
  background: #217346;
  color: #fff;
`
const TabLabel = styled.span<{ $ml: number, $size?: number }>`
  margin-left: ${p => p.$ml}px;
  font-size: ${p => p.$size || 14.1}px;
  white-space: nowrap;
`
const HomeTab = styled.span`
  margin-left: 28px;
  align-self: flex-end;
  width: 66px;
  height: 38px;
  display: flex;
  align-items: center;
  justify-content: center;
  background: #f3f3f3;
  color: #217346;
  font-size: 14px;
`
const CommentSlot = styled.span`
  margin-left: auto;
  padding-right: 19px;
  display: flex;
`
const Ribbon = styled.div`
  height: 115px;
  flex: none;
  position: relative;
  display: flex;
  padding: 5px 0 2px;
  background: #f3f3f3;
  border-bottom: 1px solid #d0d0d0;
`
const Group = styled.div<{ $w: number }>`
  position: relative;
  flex: none;
  width: ${p => p.$w}px;
  display: flex;
  flex-direction: column;
  &::after {
    content: "";
    position: absolute;
    top: 0;
    right: 0;
    bottom: 4px;
    width: 1px;
    background: #c6c6c6;
  }
`
const GroupBody = styled.div<{ $pl?: number }>`
  flex: 1;
  display: flex;
  padding-left: ${p => p.$pl || 0}px;
`
const GroupLabel = styled.div<{ $pr: number }>`
  height: 17px;
  line-height: 17px;
  padding-right: ${p => p.$pr}px;
  text-align: center;
  font-size: 13.500px;
  color: #444;
`
const LauncherSlot = styled.span`
  position: absolute;
  right: 5px;
  bottom: 2px;
  display: flex;
`
const BigButton = styled.div<{ $w: number, $pl?: number }>`
  flex: none;
  width: ${p => p.$w}px;
  padding-left: ${p => p.$pl || 0}px;
  display: flex;
  flex-direction: column;
  align-items: center;
  white-space: nowrap;
`
const BigIcon = styled.div`
  height: 44px;
  padding-top: 4px;
  display: flex;
  align-items: flex-start;
  justify-content: center;
`
const BigLabel = styled.div`
  height: 20px;
  display: flex;
  align-items: center;
  font-size: 14px;
  color: #444;
  gap: 1px;
`
const SmallStack = styled.div<{ $w?: number, $pl?: number }>`
  width: ${p => p.$w ? p.$w + "px" : "auto"};
  padding-left: ${p => p.$pl || 0}px;
  margin-top: -3px;
  flex: none;
`
const SmallRow = styled.div`
  height: 29.500px;
  display: flex;
  align-items: center;
`
const SmallText = styled.span`
  margin-left: 4px;
  font-size: 14px;
  color: #444;
  white-space: nowrap;
`
const ToolRows = styled.div`
  flex: 1;
  padding-top: 8px;
  display: flex;
  flex-direction: column;
  gap: 10px;
`
const ToolRow = styled.div<{ $pl: number, $pr?: number }>`
  height: 29px;
  display: flex;
  align-items: center;
  padding-left: ${p => p.$pl}px;
  padding-right: ${p => p.$pr || 0}px;
`
const Combo = styled.div<{ $w: number, $ml?: number }>`
  flex: none;
  width: ${p => p.$w}px;
  height: 29px;
  margin-left: ${p => p.$ml || 0}px;
  padding: 0 5px 0 3px;
  display: flex;
  align-items: center;
  justify-content: space-between;
  background: #fff;
  border: 1px solid #9a9a9a;
  font-size: 14px;
  color: #333;
`
const Glyph = styled.span<{ $bold?: boolean, $italic?: boolean, $under?: boolean, $size?: number }>`
  font-family: ${uiFont};
  font-size: ${p => p.$size || 17}px;
  font-weight: ${p => p.$bold ? 700 : 400};
  font-style: ${p => p.$italic ? "italic" : "normal"};
  text-decoration: ${p => p.$under ? "underline" : "none"};
  color: #5f5f5f;
`
const Sep = styled.span<{ $ml: number }>`
  flex: none;
  width: 1px;
  height: 27px;
  margin-left: ${p => p.$ml}px;
  background: #cfcfcf;
`
const AlignSlot = styled.span<{ $v: "top" | "bottom" }>`
  position: absolute;
  left: 50%;
  transform: translateX(-50%);
  display: flex;
  ${p => p.$v === "top" ? "top: 7px;" : "bottom: 4px;"}
`
const RowText = styled.span<{ $ml: number }>`
  margin-left: ${p => p.$ml}px;
  font-size: 14px;
  color: #444;
  white-space: nowrap;
`
const PushRight = styled.span<{ $pr?: number }>`
  margin-left: auto;
  padding-right: ${p => p.$pr || 0}px;
  display: flex;
  align-items: center;
`
const CollapseSlot = styled.span`
  position: absolute;
  right: 12px;
  bottom: 7px;
  display: flex;
`
const MessageBar = styled.div`
  height: 37px;
  flex: none;
  display: flex;
  align-items: center;
  padding-left: 14px;
  background: #fdf6b5;
  border-top: 1px solid #b8930e;
  border-bottom: 1px solid #b8930e;
  font-size: 14.200px;
  color: #333;
  white-space: nowrap;
`
const MessageTitle = styled.span`
  margin-left: 13px;
  width: 159px;
  flex: none;
  font-size: 14.600px;
`
const MessageText = styled.span`
  flex: none;
  width: 988px;
`
const MessageButton = styled.button<{ $w: number, $ml?: number }>`
  width: ${p => p.$w}px;
  height: 26px;
  margin-left: ${p => p.$ml || 0}px;
  background: #fff;
  border: 1px solid #b9b9b9;
  font-family: ${uiFont};
  font-size: 14px;
  color: #333;
  padding: 0;
`
const FormulaBar = styled.div`
  height: 55px;
  flex: none;
  display: flex;
  align-items: center;
  padding: 0 6px;
  background: #e6e6e6;
`
const NameBox = styled.div`
  width: 127px;
  height: 28px;
  padding: 0 8px 0 7px;
  display: flex;
  align-items: center;
  justify-content: space-between;
  background: #fff;
  border: 1px solid #d0d0d0;
  font-size: 14px;
`
const GripDots = styled.span<{ $ml: number }>`
  flex: none;
  align-self: center;
  width: 3px;
  height: 13px;
  margin-left: ${p => p.$ml}px;
  background: repeating-linear-gradient(#a5a5a5 0 3px, transparent 3px 5px);
`
const FxBox = styled.div`
  width: 136px;
  height: 28px;
  margin-left: 18px;
  padding: 0 14px 0 14px;
  display: flex;
  align-items: center;
  justify-content: space-between;
  background: #fff;
  border: 1px solid #d0d0d0;
`
const FxText = styled.i`
  font-family: "Liberation Serif", serif;
  font-size: 18px;
  color: #555;
`
const FormulaInput = styled.div`
  width: 1604px;
  height: 28px;
  margin-left: 4px;
  padding-right: 5px;
  display: flex;
  align-items: center;
  justify-content: flex-end;
  background: #fff;
  border: 1px solid #d0d0d0;
`
const SheetArea = styled.div`
  height: 686px;
  flex: none;
  display: flex;
  background: #fff;
  border-bottom: 2px solid #9b9b9b;
`
const SheetGrid = styled.div`
  width: 1896px;
  flex: none;
  display: grid;
  grid-template-columns: 37px repeat(8, 213px) 88px 67px;
  grid-template-rows: 23px 55px repeat(17, 29px) repeat(4, 23px) 21px;
`
const ColHeader = styled.div<{ $active?: boolean, $corner?: boolean, $pl?: number }>`
  display: flex;
  justify-content: ${p => p.$corner ? "flex-end" : "center"};
  align-items: ${p => p.$corner ? "flex-end" : "center"};
  padding: ${p => p.$corner ? "0 4px 2px 0" : `2px 0 0 ${p.$pl || 0}px`};
  background: ${p => p.$active ? "#d2d2d2" : "#e6e6e6"};
  border-right: 1px solid #c6c6c6;
  border-bottom: ${p => p.$active ? "2px solid #217346" : "1px solid #9f9f9f"};
  font-family: ${sheetFont};
  font-size: 16px;
  color: ${p => p.$active ? "#0f5c32" : "#222"};
`
const RowHeader = styled.div<{ $tall?: boolean, $active?: boolean }>`
  display: flex;
  align-items: flex-end;
  justify-content: center;
  padding-bottom: 1px;
  background: ${p => p.$active ? "#d2d2d2" : "#e6e6e6"};
  border-bottom: 1px solid #c6c6c6;
  border-right: ${p => p.$active ? "2px solid #217346" : "1px solid #9f9f9f"};
  font-family: ${sheetFont};
  font-size: 16px;
  color: ${p => p.$active ? "#0f5c32" : "#222"};
`
const HeadCell = styled.div`
  display: flex;
  align-items: center;
  justify-content: center;
  background: #bfbfbf;
  border-right: 1px solid #222;
  border-bottom: 1px solid #111;
  color: #f00;
  white-space: nowrap;
`
const HeadText = styled.span`
  display: inline-block;
  font-family: ${sheetFont};
  font-weight: 700;
  font-size: 24px;
  transform: translateY(-1px) scaleX(.8);
`
const DataCell = styled.div`
  display: flex;
  align-items: center;
  justify-content: center;
  padding-top: 2px;
  background: #fff;
  border-right: 1px solid #222;
  border-bottom: 1px solid #111;
  color: #000;
  white-space: nowrap;
`
const CellText = styled.span<{ $arabic?: boolean }>`
  display: inline-block;
  font-family: ${sheetFont};
  font-weight: 700;
  font-size: ${p => p.$arabic ? 19 : 23.500}px;
  transform: ${p => p.$arabic ? "translateY(-2px) scaleX(.82)" : "none"};
`
const EmptyCell = styled.div<{ $selected?: boolean }>`
  position: relative;
  background: #fff;
  border-right: 1px solid #d8d8d8;
  border-bottom: 1px solid #d8d8d8;
  ${p => p.$selected && `
    outline: 2px solid #217346;
    outline-offset: -1px;
    &::after {
      content: "";
      position: absolute;
      right: -3px;
      bottom: -3px;
      width: 5px;
      height: 5px;
      background: #217346;
      border: 1px solid #fff;
    }
  `}
`
const VScroll = styled.div`
  flex: none;
  width: 24px;
  padding: 2px 3px 0;
  display: flex;
  flex-direction: column;
  background: #e6e6e6;
`
const ScrollButton = styled.div<{ $pushed?: boolean }>`
  width: 18px;
  height: 18px;
  flex: none;
  margin-top: ${p => p.$pushed ? "auto" : "0"};
  display: flex;
  align-items: center;
  justify-content: center;
  background: #fff;
  border: 1px solid #a5a5a5;
`
const VThumb = styled.div`
  width: 18px;
  height: 618px;
  background: #fff;
  border: 1px solid #a5a5a5;
  border-top: 0;
`
const SheetTabs = styled.div`
  height: 29px;
  flex: none;
  display: flex;
  align-items: center;
  background: #e6e6e6;
  border-bottom: 1px solid #c6c6c6;
`
const SheetTab = styled.div`
  width: 118px;
  height: 26px;
  margin-left: 42px;
  align-self: flex-start;
  display: flex;
  align-items: center;
  justify-content: center;
  background: #fff;
  border-bottom: 2px solid #217346;
  font-family: ${sheetFont};
  font-weight: 700;
  font-size: 14px;
  color: #217346;
`
const AddSheet = styled.span`
  width: 20px;
  height: 20px;
  margin-left: 34px;
  border: 1.500px solid #888;
  border-radius: 50%;
  display: flex;
  align-items: center;
  justify-content: center;
  font-size: 18px;
  line-height: 1;
  color: #777;
`
const HScroll = styled.div`
  width: 728px;
  height: 18px;
  margin-left: 15px;
  display: flex;
`
const HButton = styled.div<{ $pushed?: boolean }>`
  width: 19px;
  flex: none;
  margin-left: ${p => p.$pushed ? "auto" : "0"};
  display: flex;
  align-items: center;
  justify-content: center;
  background: #fff;
  border: 1px solid #a5a5a5;
`
const HThumb = styled.div`
  width: 613px;
  background: #fff;
  border: 1px solid #a5a5a5;
  border-left: 0;
`
const StatusBar = styled.div`
  height: 27px;
  flex: none;
  display: flex;
  align-items: center;
  background: #f3f3f3;
  font-size: 12.500px;
  color: #444;
`
const StatusText = styled.span<{ $ml?: number, $mr?: number }>`
  margin-left: ${p => p.$ml || 0}px;
  margin-right: ${p => p.$mr || 0}px;
  white-space: nowrap;
`
const ViewButton = styled.div<{ $on?: boolean, $push?: boolean, $w?: number }>`
  width: ${p => p.$w || 50}px;
  height: 27px;
  flex: none;
  display: flex;
  align-items: center;
  justify-content: center;
  background: ${p => p.$on ? "#c8c8c8" : "transparent"};
  ${p => p.$push ? "margin-left: auto;" : ""}
`
const ZoomControl = styled.div`
  width: 165px;
  margin-left: 11px;
  display: flex;
  align-items: center;
  gap: 5px;
  font-size: 15px;
`
const ZoomTrack = styled.div`
  position: relative;
  width: 125px;
  height: 1px;
  background: #444;
`
const ZoomThumb = styled.div`
  position: absolute;
  left: 60px;
  top: -7px;
  width: 5px;
  height: 15px;
  background: #555;
`
const Taskbar = styled.div`
  height: 50px;
  flex: none;
  display: flex;
  background: #eeeeee;
`
const StartSlot = styled.div`
  width: 61px;
  flex: none;
  display: flex;
  align-items: center;
  justify-content: center;
  padding-right: 2px;
`
const SearchBox = styled.div`
  width: 360px;
  flex: none;
  display: flex;
  align-items: center;
  padding-left: 14px;
  background: #fff;
  border: 1px solid #c6c6c6;
  border-bottom: 0;
  overflow: hidden;
`
const SearchText = styled.span`
  margin-left: 15px;
  font-size: 17.800px;
  color: #333;
  white-space: nowrap;
`
const TaskItem = styled.div<{ $active?: boolean, $open?: boolean }>`
  width: 62px;
  flex: none;
  display: flex;
  align-items: center;
  justify-content: center;
  background: ${p => p.$active ? "#f9f9f9" : "transparent"};
  border-bottom: 3px solid ${p => p.$open ? "#bdbdbd" : "transparent"};
  border-left: ${p => p.$open && !p.$active ? "5px solid #eee" : "0"};
  border-right: ${p => p.$open && !p.$active ? "5px solid #eee" : "0"};
  padding-top: 3px;
`
const Tray = styled.div`
  flex: 1;
  display: flex;
  align-items: center;
  padding-left: 185px;
`
const TrayText = styled.span`
  margin-left: 11px;
  font-size: 17px;
  color: #222;
`
const TrayGlyph = styled.span`
  margin-left: 22px;
  font-family: "DejaVu Sans", sans-serif;
  font-size: 14px;
  color: #222;
`
const Clock = styled.div`
  width: 74px;
  margin-left: 22px;
  text-align: center;
  font-size: 13.500px;
  line-height: 21px;
  color: #222;
  white-space: nowrap;
`
const NoticeSlot = styled.div`
  position: relative;
  margin-left: 19px;
  display: flex;
`
const NoticeBadge = styled.span`
  position: absolute;
  left: 8px;
  top: 9px;
  width: 18px;
  height: 18px;
  border-radius: 50%;
  background: #c9c9c9;
  border: 1px solid #555;
  font-size: 11px;
  display: flex;
  align-items: center;
  justify-content: center;
  color: #111;
`
const Watermark = styled.div`
  position: absolute;
  left: 840px;
  top: 942px;
  width: 240px;
  display: flex;
  flex-direction: column;
  align-items: center;
  pointer-events: none;
  color: rgba(110, 110, 110, .16);
`
const WatermarkArabic = styled.div`
  font-family: "DejaVu Sans", sans-serif;
  font-weight: 700;
  font-size: 66px;
  line-height: 78px;
  white-space: nowrap;
`
const WatermarkLatin = styled.div`
  font-family: "Open Sans", sans-serif;
  font-weight: 600;
  font-size: 40px;
  line-height: 40px;
  white-space: nowrap;
`
